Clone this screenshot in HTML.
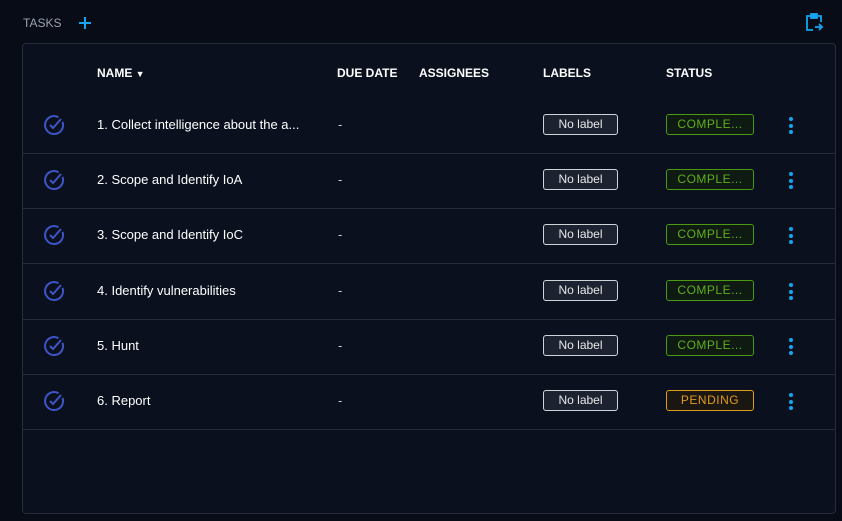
<!DOCTYPE html>
<html><head><style>
body{margin:0;width:842px;height:521px;background:#070c17;font-family:"Liberation Sans",sans-serif;position:relative;overflow:hidden;color:#fff}
.t{position:absolute;left:23px;top:16px;font-size:12px;color:#9aa3b0}
.panel{position:absolute;left:22px;top:43px;width:812px;height:469px;border:1px solid #252c3a;border-radius:4px;background:#0a101d}
.h{position:absolute;top:22px;font-size:12px;font-weight:bold;color:#fff}
.row{position:absolute;left:0;width:812px;height:55px;border-bottom:1px solid #252c3a}
.nm{position:absolute;left:74px;top:19px;font-size:13px;color:#fff}
.dd{position:absolute;left:315px;top:19px;font-size:13px;color:#ccc}
.lb{position:absolute;left:520px;top:16px;width:73px;height:19px;border:1px solid #d0d4da;border-radius:3px;background:#1c2230;font-size:12px;text-align:center;line-height:19px;color:#e8e8e8}
.st{position:absolute;left:643px;top:16px;width:86px;height:19px;border:1px solid #4a9a12;border-radius:3px;background:#0f1a12;font-size:12px;text-align:center;line-height:19px;color:#5fae1e;letter-spacing:.5px}
.st.p{border-color:#e09a1c;color:#e09a1c;background:#1a1712}
.dots{position:absolute;left:766px;top:19px;width:4px}
.dots i{display:block;width:4px;height:4px;border-radius:50%;background:#14a6f0;margin-bottom:2.5px}
.ck{position:absolute;left:19px;top:15px}
</style></head><body>
<div class="t">TASKS</div>
<svg style="position:absolute;left:78px;top:16px" width="14" height="14"><path d="M7 1V13M1 7H13" stroke="#14a6f0" stroke-width="2"/></svg>
<svg style="position:absolute;left:804px;top:12px" width="20" height="20" viewBox="0 0 20 20" fill="none" stroke="#14a6f0" stroke-width="1.8"><path d="M6 4H3V18H9M14 4H17V10"/><rect x="7" y="2" width="6" height="4" fill="#14a6f0"/><path d="M11 15H18M15 12L18 15L15 18"/></svg>
<div class="panel">
<div class="h" style="left:74px">NAME <span style="font-size:9px">&#9660;</span></div>
<div class="h" style="left:314px">DUE DATE</div>
<div class="h" style="left:396px">ASSIGNEES</div>
<div class="h" style="left:520px">LABELS</div>
<div class="h" style="left:643px">STATUS</div>
<div class="row" style="top:54px"><svg class="ck" width="24" height="24" viewBox="0 0 24 24" fill="none" stroke="#3e55c8" stroke-width="2"><path d="M16.5 4.2A9 9 0 1 0 20.5 8.9"/><path d="M8 12L11 15L19 6"/></svg><div class="nm">1. Collect intelligence about the a...</div><div class="dd">-</div><div class="lb">No label</div><div class="st">COMPLE...</div><div class="dots"><i></i><i></i><i></i></div></div>
<div class="row" style="top:109px"><svg class="ck" width="24" height="24" viewBox="0 0 24 24" fill="none" stroke="#3e55c8" stroke-width="2"><path d="M16.5 4.2A9 9 0 1 0 20.5 8.9"/><path d="M8 12L11 15L19 6"/></svg><div class="nm">2. Scope and Identify IoA</div><div class="dd">-</div><div class="lb">No label</div><div class="st">COMPLE...</div><div class="dots"><i></i><i></i><i></i></div></div>
<div class="row" style="top:164px"><svg class="ck" width="24" height="24" viewBox="0 0 24 24" fill="none" stroke="#3e55c8" stroke-width="2"><path d="M16.5 4.2A9 9 0 1 0 20.5 8.9"/><path d="M8 12L11 15L19 6"/></svg><div class="nm">3. Scope and Identify IoC</div><div class="dd">-</div><div class="lb">No label</div><div class="st">COMPLE...</div><div class="dots"><i></i><i></i><i></i></div></div>
<div class="row" style="top:220px"><svg class="ck" width="24" height="24" viewBox="0 0 24 24" fill="none" stroke="#3e55c8" stroke-width="2"><path d="M16.5 4.2A9 9 0 1 0 20.5 8.9"/><path d="M8 12L11 15L19 6"/></svg><div class="nm">4. Identify vulnerabilities</div><div class="dd">-</div><div class="lb">No label</div><div class="st">COMPLE...</div><div class="dots"><i></i><i></i><i></i></div></div>
<div class="row" style="top:275px"><svg class="ck" width="24" height="24" viewBox="0 0 24 24" fill="none" stroke="#3e55c8" stroke-width="2"><path d="M16.5 4.2A9 9 0 1 0 20.5 8.9"/><path d="M8 12L11 15L19 6"/></svg><div class="nm">5. Hunt</div><div class="dd">-</div><div class="lb">No label</div><div class="st">COMPLE...</div><div class="dots"><i></i><i></i><i></i></div></div>
<div class="row" style="top:330px"><svg class="ck" width="24" height="24" viewBox="0 0 24 24" fill="none" stroke="#3e55c8" stroke-width="2"><path d="M16.5 4.2A9 9 0 1 0 20.5 8.9"/><path d="M8 12L11 15L19 6"/></svg><div class="nm">6. Report</div><div class="dd">-</div><div class="lb">No label</div><div class="st p">PENDING</div><div class="dots"><i></i><i></i><i></i></div></div>
</div>
</body></html>
